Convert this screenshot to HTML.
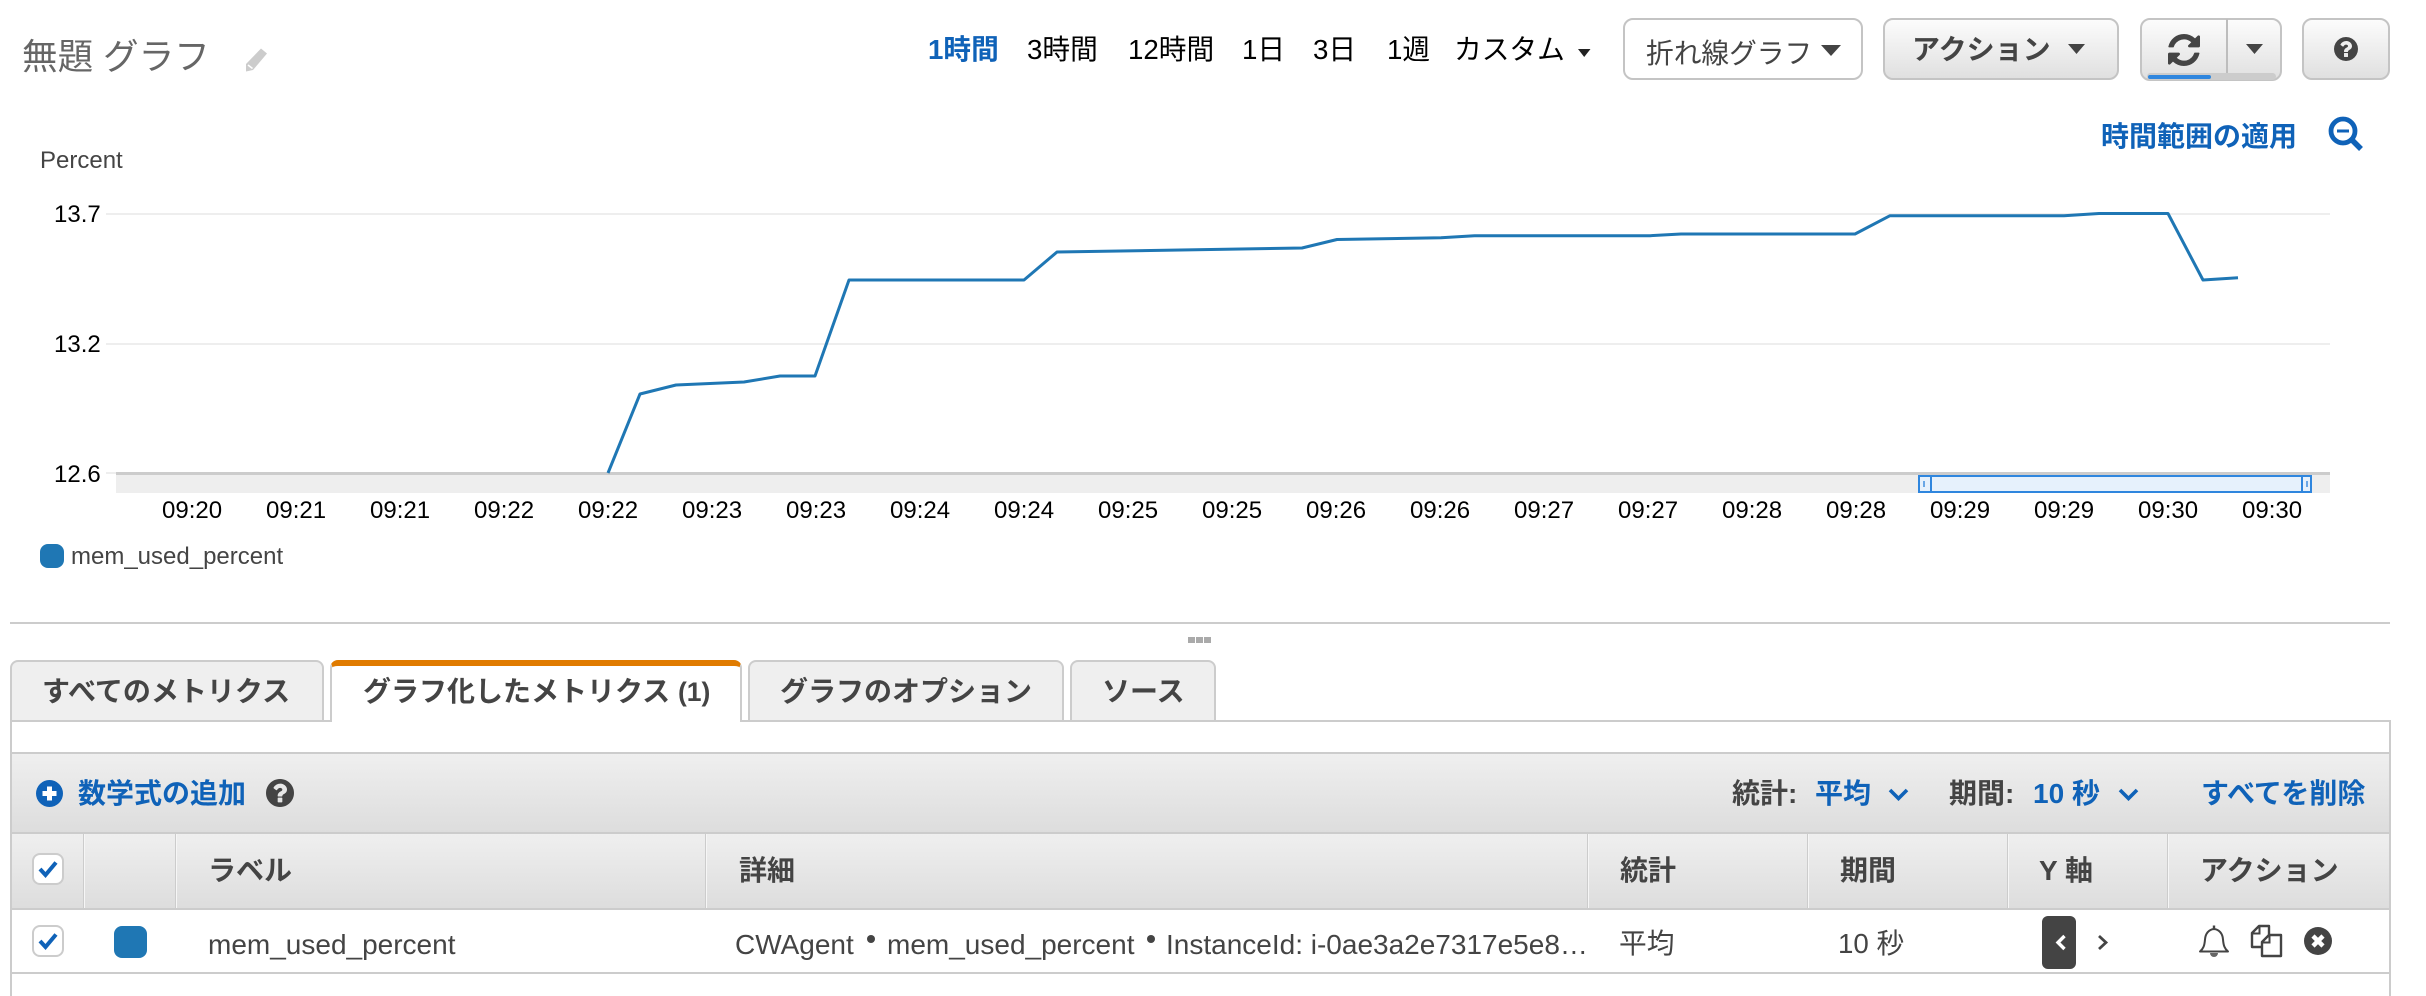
<!DOCTYPE html>
<html lang="ja"><head><meta charset="utf-8"><title>無題 グラフ</title>
<style>
html,body{margin:0;padding:0;background:#fff;}
#p{position:relative;width:2426px;height:996px;overflow:hidden;background:#fff;font-family:"Liberation Sans","Noto Sans CJK JP",sans-serif;font-size:27.7px;color:#444;}
.a{position:absolute;box-sizing:border-box;}
.t{position:absolute;white-space:nowrap;line-height:40px;height:40px;}
.b{font-weight:bold;font-size:28px;}
.r{font-size:28px;}
.bl{color:#0f62b8;}
.k{color:#000;}
.g{font-size:24px;line-height:30px;height:30px;color:#000;}
.btn{position:absolute;box-sizing:border-box;border:2px solid #c4c4c4;border-radius:10px;background:linear-gradient(#fcfcfc,#e0e0e0);}
.tab{position:absolute;box-sizing:border-box;top:660px;height:62px;background:#efefef;border:2px solid #ccc;border-radius:8px 8px 0 0;}
.sep{position:absolute;top:834px;height:74px;width:2px;background:#f6f6f6;border-left:1px solid #ccc;box-sizing:border-box;}
.cb{position:absolute;box-sizing:border-box;left:32px;width:32px;height:32px;background:#fff;border:2px solid #ccc;border-radius:8px;}
svg{position:absolute;display:block;}
</style></head><body><div id="p">

<div class="t" style="left:22px;top:37px;font-size:35.6px;color:#666;">無題 グラフ</div>
<svg style="left:244px;top:47px" width="25" height="25" viewBox="0 0 25 25"><path d="M17 1.5l6 5L9 23l-7 1.5L2 17z" fill="#ccc"/><path d="M4 18l4.5 3.5" stroke="#fff" stroke-width="1.5" fill="none"/></svg>

<div class="t bl" style="left:928px;top:30px;font-weight:bold;">1時間</div>
<div class="t k" style="left:1027px;top:30px;">3時間</div>
<div class="t k" style="left:1128px;top:30px;">12時間</div>
<div class="t k" style="left:1242px;top:30px;">1日</div>
<div class="t k" style="left:1313px;top:30px;">3日</div>
<div class="t k" style="left:1387px;top:30px;">1週</div>
<div class="t k" style="left:1454px;top:30px;">カスタム</div>
<svg style="left:1578px;top:49px" width="13" height="8"><path d="M0 0h12.500L6.200 8z" fill="#222"/></svg>

<div class="btn" style="left:1623px;top:18px;width:240px;height:62px;background:#fff;"></div>
<div class="t" style="left:1646px;top:34px;">折れ線グラフ</div>
<svg style="left:1821px;top:45px" width="20" height="11"><path d="M0 0h20L10 11z" fill="#444"/></svg>

<div class="btn" style="left:1883px;top:18px;width:236px;height:62px;"></div>
<div class="t b" style="left:1912px;top:30px;">アクション</div>
<svg style="left:2068px;top:44px" width="17" height="10"><path d="M0 0h17L8.500 10z" fill="#444"/></svg>

<div class="btn" style="left:2140px;top:18px;width:142px;height:63px;"></div>
<div class="a" style="left:2226px;top:19px;width:2px;height:54px;background:#bdbdbd;"></div>
<div class="a" style="left:2147px;top:73px;width:129px;height:7px;background:#ccc;border-radius:4px;"></div>
<div class="a" style="left:2148px;top:75px;width:63px;height:4px;background:#2f86de;border-radius:2px;"></div>
<svg style="left:2168px;top:34px" width="32" height="32" viewBox="128 128 1536 1536"><path fill="#444" d="M1639 1056q0 5-1 7-64 268-268 434.5t-478 166.5q-146 0-282.5-55t-243.5-157l-129 129q-19 19-45 19t-45-19-19-45v-448q0-26 19-45t45-19h448q26 0 45 19t19 45-19 45l-137 137q71 66 161 102t187 36q134 0 250-65t186-179q11-17 53-117 8-23 30-23h192q13 0 22.5 9.5t9.5 22.5zm25-800v448q0 26-19 45t-45 19h-448q-26 0-45-19t-19-45 19-45l138-138q-148-137-349-137-134 0-250 65t-186 179q-11 17-53 117-8 23-30 23h-199q-13 0-22.5-9.5t-9.5-22.5v-7q65-268 270-434.5t480-166.5q146 0 284 55.5t245 156.5l130-129q19-19 45-19t45 19 19 45z"/></svg>
<svg style="left:2246px;top:44px" width="17" height="10"><path d="M0 0h17L8.500 10z" fill="#444"/></svg>

<div class="btn" style="left:2302px;top:18px;width:88px;height:62px;"></div>
<svg style="left:2334px;top:37px" width="24" height="24" viewBox="128 128 1536 1536"><path fill="#444" d="M1024 1376v-192q0-14-9-23t-23-9h-192q-14 0-23 9t-9 23v192q0 14 9 23t23 9h192q14 0 23-9t9-23zm256-672q0-88-55.5-163t-138.5-116-170-41q-243 0-371 213-15 24 8 42l132 100q7 6 19 6 16 0 25-12 53-68 86-92 34-24 86-24 48 0 85.5 26t37.5 59q0 38-20 61t-68 45q-63 28-115.5 86.5t-52.5 125.5v36q0 14 9 23t23 9h192q14 0 23-9t9-23q0-19 21.5-49.5t54.5-49.5q32-18 49-28.5t46-35 44.5-48 28-60.5 12.5-81zm384 192q0 209-103 385.5t-279.5 279.5-385.5 103-385.5-103-279.5-279.5-103-385.5 103-385.5 279.5-279.5 385.5-103 385.5 103 279.5 279.5 103 385.5z"/></svg>

<div class="t b bl" style="left:2101px;top:117px;">時間範囲の適用</div>
<svg style="left:2328px;top:116px" width="36" height="36" viewBox="0 0 36 36"><circle cx="15" cy="15" r="12" fill="none" stroke="#0f62b8" stroke-width="4.800"/><path d="M9 15h12" stroke="#0f62b8" stroke-width="3"/><path d="M23 23l10 10" stroke="#0f62b8" stroke-width="5.500"/></svg>

<div class="t g" style="left:40px;top:146px;color:#444;">Percent</div>

<div class="a" style="left:106px;top:213px;width:2224px;height:2px;background:#eee;"></div>
<div class="a" style="left:106px;top:343px;width:2224px;height:2px;background:#eee;"></div>
<div class="a" style="left:106px;top:472px;width:10px;height:2px;background:#eee;"></div>
<div class="t g" style="left:54px;top:200px;">13.7</div>
<div class="t g" style="left:54px;top:330px;">13.2</div>
<div class="t g" style="left:54px;top:460px;">12.6</div>

<div class="a" style="left:116px;top:475px;width:2214px;height:18px;background:#eee;"></div>
<div class="a" style="left:116px;top:472px;width:2214px;height:3px;background:#ccc;"></div>

<svg style="left:0;top:0" width="2426" height="500"><polyline fill="none" stroke="#1f77b4" stroke-width="3" stroke-linejoin="round" points="608,473 640,394 676,385 744,382 780,376 815,376 849,280 1024,280 1057,252 1302,248 1337,239.500 1441,237.700 1474.500,235.700 1650,235.700 1681,234 1855,234 1890,215.700 2064,215.700 2099,213.500 2168,213.500 2203,280 2238,277.700"/></svg>

<div class="a" style="left:1918px;top:475px;width:394px;height:18px;background:#e6f1fc;border:2px solid #2f86de;"></div>
<div class="a" style="left:1930px;top:476px;width:2px;height:16px;background:#2f86de;"></div>
<div class="a" style="left:1923px;top:481px;width:2px;height:6px;background:#6aa7e6;"></div>
<div class="a" style="left:2301px;top:476px;width:2px;height:16px;background:#2f86de;"></div>
<div class="a" style="left:2306px;top:481px;width:2px;height:6px;background:#6aa7e6;"></div>

<div class="t g" style="left:162px;top:496px;">09:20</div>
<div class="t g" style="left:266px;top:496px;">09:21</div>
<div class="t g" style="left:370px;top:496px;">09:21</div>
<div class="t g" style="left:474px;top:496px;">09:22</div>
<div class="t g" style="left:578px;top:496px;">09:22</div>
<div class="t g" style="left:682px;top:496px;">09:23</div>
<div class="t g" style="left:786px;top:496px;">09:23</div>
<div class="t g" style="left:890px;top:496px;">09:24</div>
<div class="t g" style="left:994px;top:496px;">09:24</div>
<div class="t g" style="left:1098px;top:496px;">09:25</div>
<div class="t g" style="left:1202px;top:496px;">09:25</div>
<div class="t g" style="left:1306px;top:496px;">09:26</div>
<div class="t g" style="left:1410px;top:496px;">09:26</div>
<div class="t g" style="left:1514px;top:496px;">09:27</div>
<div class="t g" style="left:1618px;top:496px;">09:27</div>
<div class="t g" style="left:1722px;top:496px;">09:28</div>
<div class="t g" style="left:1826px;top:496px;">09:28</div>
<div class="t g" style="left:1930px;top:496px;">09:29</div>
<div class="t g" style="left:2034px;top:496px;">09:29</div>
<div class="t g" style="left:2138px;top:496px;">09:30</div>
<div class="t g" style="left:2242px;top:496px;">09:30</div>

<div class="a" style="left:40px;top:544px;width:24px;height:24px;border-radius:8px;background:#1f77b4;"></div>
<div class="t g" style="left:71px;top:542px;color:#444;">mem_used_percent</div>

<div class="a" style="left:10px;top:622px;width:2380px;height:2px;background:#ccc;"></div>
<div class="a" style="left:1188px;top:637px;width:7px;height:6px;background:#aaa;"></div>
<div class="a" style="left:1196px;top:637px;width:7px;height:6px;background:#aaa;"></div>
<div class="a" style="left:1204px;top:637px;width:7px;height:6px;background:#aaa;"></div>

<div class="a" style="left:10px;top:720px;width:2381px;height:276px;border:2px solid #ccc;border-bottom:0;"></div>

<div class="tab" style="left:10px;width:314px;"></div>
<div class="t b" style="left:42px;top:672px;">すべてのメトリクス</div>
<div class="tab" style="left:330px;width:412px;background:#fff;border-top:6px solid #e07b00;border-bottom:0;"></div>
<div class="t b" style="left:363px;top:672px;">グラフ化したメトリクス <span style="font-size:26.500px">(1)</span></div>
<div class="tab" style="left:748px;width:316px;"></div>
<div class="t b" style="left:780px;top:672px;">グラフのオプション</div>
<div class="tab" style="left:1070px;width:146px;"></div>
<div class="t b" style="left:1102px;top:672px;">ソース</div>

<div class="a" style="left:10px;top:752px;width:2381px;height:82px;background:linear-gradient(#efefef,#ddd);border:2px solid #ccc;"></div>
<div class="a" style="left:10px;top:832px;width:2381px;height:78px;background:linear-gradient(#efefef,#ddd);border:2px solid #ccc;"></div>

<svg style="left:36px;top:780px" width="27" height="27" viewBox="0 0 27 27"><circle cx="13.500" cy="13.500" r="13.500" fill="#0f62b8"/><path d="M13.500 6.500v14M6.500 13.500h14" stroke="#fff" stroke-width="5"/></svg>
<div class="t b bl" style="left:78px;top:774px;">数学式の追加</div>
<svg style="left:266px;top:779px" width="28" height="28" viewBox="128 128 1536 1536"><path fill="#444" d="M1024 1376v-192q0-14-9-23t-23-9h-192q-14 0-23 9t-9 23v192q0 14 9 23t23 9h192q14 0 23-9t9-23zm256-672q0-88-55.5-163t-138.5-116-170-41q-243 0-371 213-15 24 8 42l132 100q7 6 19 6 16 0 25-12 53-68 86-92 34-24 86-24 48 0 85.5 26t37.5 59q0 38-20 61t-68 45q-63 28-115.5 86.5t-52.5 125.5v36q0 14 9 23t23 9h192q14 0 23-9t9-23q0-19 21.5-49.5t54.5-49.5q32-18 49-28.5t46-35 44.5-48 28-60.5 12.5-81zm384 192q0 209-103 385.5t-279.5 279.5-385.5 103-385.5-103-279.5-279.5-103-385.5 103-385.5 279.5-279.5 385.5-103 385.5 103 279.5 279.5 103 385.5z"/></svg>

<div class="t b" style="left:1732px;top:774px;">統計:</div>
<div class="t b bl" style="left:1815px;top:774px;">平均</div>
<svg style="left:1888px;top:788px" width="21" height="13"><path d="M2 2l8.500 8.500L19 2" fill="none" stroke="#0f62b8" stroke-width="3.600"/></svg>
<div class="t b" style="left:1949px;top:774px;">期間:</div>
<div class="t b bl" style="left:2033px;top:774px;">10 秒</div>
<svg style="left:2118px;top:788px" width="21" height="13"><path d="M2 2l8.500 8.500L19 2" fill="none" stroke="#0f62b8" stroke-width="3.600"/></svg>
<div class="t b bl" style="left:2201px;top:774px;">すべてを削除</div>

<div class="sep" style="left:83px;"></div>
<div class="sep" style="left:175px;"></div>
<div class="sep" style="left:705px;"></div>
<div class="sep" style="left:1587px;"></div>
<div class="sep" style="left:1807px;"></div>
<div class="sep" style="left:2007px;"></div>
<div class="sep" style="left:2167px;"></div>

<div class="cb" style="top:853px;"></div>
<svg style="left:37px;top:860px" width="22" height="18"><path d="M3 9l5.500 6L19 2.500" fill="none" stroke="#0f62b8" stroke-width="4"/></svg>
<div class="t b" style="left:208px;top:851px;">ラベル</div>
<div class="t b" style="left:739px;top:851px;">詳細</div>
<div class="t b" style="left:1620px;top:851px;">統計</div>
<div class="t b" style="left:1840px;top:851px;">期間</div>
<div class="t b" style="left:2039px;top:851px;">Y 軸</div>
<div class="t b" style="left:2200px;top:851px;">アクション</div>

<div class="a" style="left:12px;top:972px;width:2377px;height:2px;background:#ccc;"></div>
<div class="cb" style="top:925px;"></div>
<svg style="left:37px;top:932px" width="22" height="18"><path d="M3 9l5.500 6L19 2.500" fill="none" stroke="#0f62b8" stroke-width="4"/></svg>
<div class="a" style="left:114px;top:926px;width:33px;height:32px;border-radius:8px;background:#1f77b4;"></div>
<div class="t r" style="left:208px;top:925px;">mem_used_percent</div>
<div class="t r" style="left:735px;top:925px;">CWAgent</div>
<div class="a" style="left:867px;top:935px;width:8px;height:8px;border-radius:50%;background:#444;"></div>
<div class="t r" style="left:887px;top:925px;">mem_used_percent</div>
<div class="a" style="left:1147px;top:935px;width:8px;height:8px;border-radius:50%;background:#444;"></div>
<div class="t r" style="left:1166px;top:925px;">InstanceId: i-0ae3a2e7317e5e8…</div>
<div class="t" style="left:1619px;top:924px;">平均</div>
<div class="t" style="left:1838px;top:924px;">10 秒</div>

<div class="a" style="left:2042px;top:916px;width:34px;height:53px;border-radius:6px;background:#444;"></div>
<svg style="left:2054px;top:934px" width="14" height="17"><path d="M10.500 2L4 8.500l6.500 6.500" fill="none" stroke="#fff" stroke-width="3.400"/></svg>
<svg style="left:2096px;top:934px" width="14" height="17"><path d="M3 2l7 6.500L3 15" fill="none" stroke="#444" stroke-width="2.800"/></svg>

<svg style="left:2198px;top:924px" width="32" height="34" viewBox="0 0 32 34"><path d="M2 27.500c3.500-3 4.500-6 5-12 .4-6 3.800-10 9-10.500 5.200.5 8.600 4.500 9 10.500.5 6 1.500 9 5 12z" fill="none" stroke="#444" stroke-width="2" stroke-linejoin="round"/><path d="M16 1.500v4" stroke="#444" stroke-width="2.400"/><path d="M12 29a4 4 0 0 0 8 0z" fill="#666"/></svg>
<svg style="left:2250px;top:924px" width="33" height="34" viewBox="0 0 33 34"><path d="M11 23H2V9l7-7h10v9" fill="none" stroke="#444" stroke-width="2.400" stroke-linejoin="round"/><path d="M2 9.500h7.500V2" fill="none" stroke="#444" stroke-width="2"/><path d="M12 32V18l7-7h12v21z" fill="#fff" stroke="#444" stroke-width="2.400" stroke-linejoin="round"/><path d="M12 18.500h7.500V11" fill="none" stroke="#444" stroke-width="2"/></svg>
<svg style="left:2304px;top:927px" width="28" height="28" viewBox="0 0 28 28"><circle cx="14" cy="14" r="14" fill="#444"/><path d="M9 9l10 10M19 9L9 19" stroke="#fff" stroke-width="4.500"/></svg>

</div></body></html>
